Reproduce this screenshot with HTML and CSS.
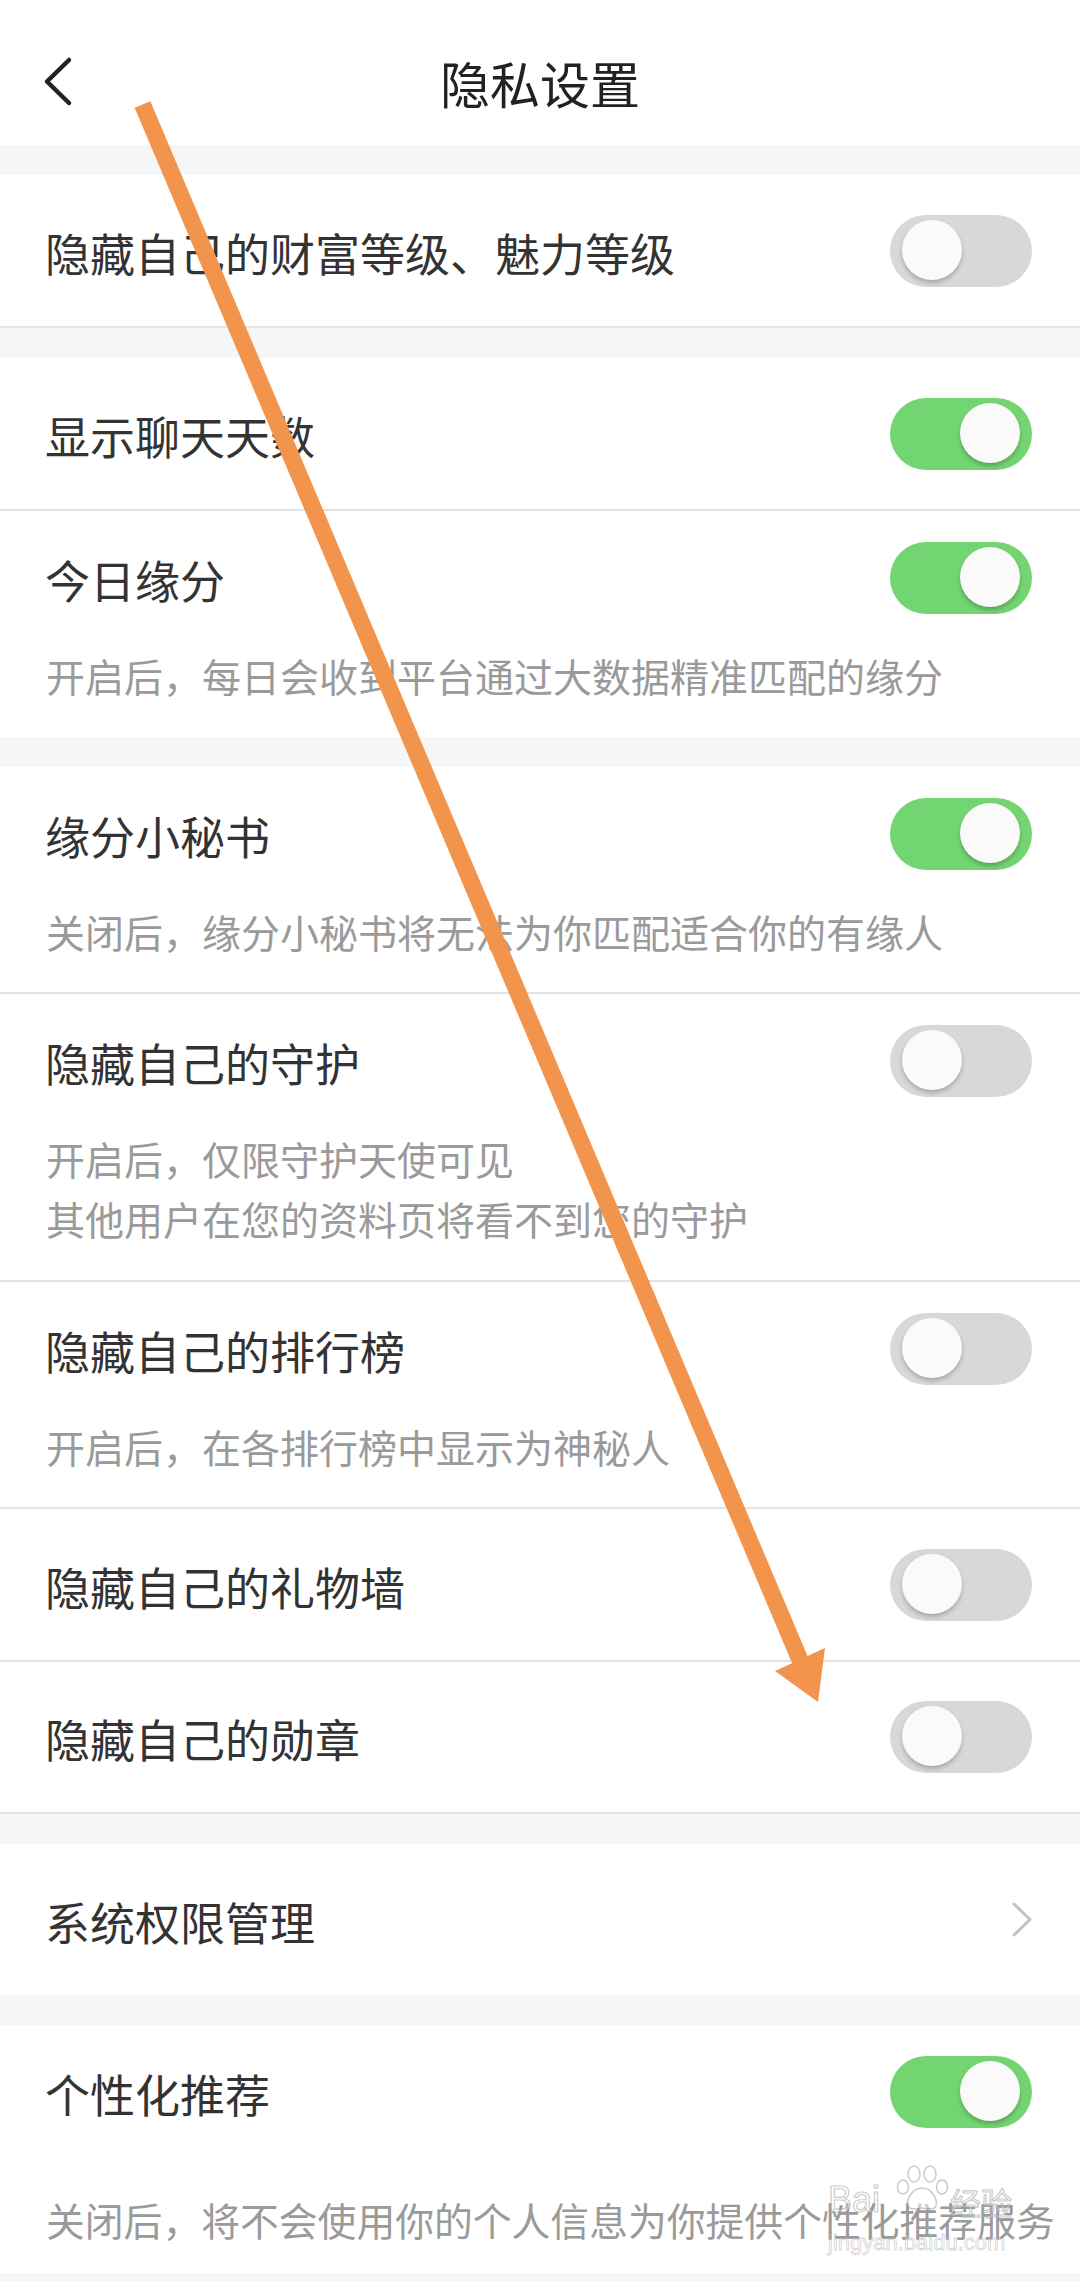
FILE: index.html
```html
<!DOCTYPE html>
<html lang="zh-CN">
<head>
<meta charset="utf-8">
<title>隐私设置</title>
<link rel="stylesheet" href="styles.css">
</head>
<body>
<div class="page">
  <header class="topbar">
    <div class="back">
      <svg class="back-icon" width="40" height="60" viewBox="0 0 40 60"><polyline points="31,8 9,29.5 31,51" fill="none" stroke="#222" stroke-width="4.5" stroke-linecap="round" stroke-linejoin="round"/></svg>
    </div>
    <h1 class="title">隐私设置</h1>
    <div></div>
  </header>

  <section class="group group-bordered">
    <div class="item">
      <div class="item-main"><span class="label">隐藏自己的财富等级、魅力等级</span><span class="switch"><span class="knob"></span></span></div>
    </div>
  </section>

  <section class="group">
    <div class="item divided">
      <div class="item-main"><span class="label">显示聊天天数</span><span class="switch on"><span class="knob"></span></span></div>
    </div>
    <div class="item has-desc">
      <div class="item-main"><span class="label">今日缘分</span><span class="switch on"><span class="knob"></span></span></div>
      <p class="desc">开启后，每日会收到平台通过大数据精准匹配的缘分</p>
    </div>
  </section>

  <section class="group group-bordered">
    <div class="item has-desc divided">
      <div class="item-main"><span class="label">缘分小秘书</span><span class="switch on"><span class="knob"></span></span></div>
      <p class="desc">关闭后，缘分小秘书将无法为你匹配适合你的有缘人</p>
    </div>
    <div class="item has-desc divided">
      <div class="item-main"><span class="label">隐藏自己的守护</span><span class="switch"><span class="knob"></span></span></div>
      <p class="desc">开启后，仅限守护天使可见<br>其他用户在您的资料页将看不到您的守护</p>
    </div>
    <div class="item has-desc divided">
      <div class="item-main"><span class="label">隐藏自己的排行榜</span><span class="switch"><span class="knob"></span></span></div>
      <p class="desc">开启后，在各排行榜中显示为神秘人</p>
    </div>
    <div class="item divided">
      <div class="item-main"><span class="label">隐藏自己的礼物墙</span><span class="switch"><span class="knob"></span></span></div>
    </div>
    <div class="item">
      <div class="item-main short"><span class="label">隐藏自己的勋章</span><span class="switch"><span class="knob"></span></span></div>
    </div>
  </section>

  <section class="group">
    <div class="item">
      <div class="item-main"><span class="label">系统权限管理</span>
        <svg class="chevron" width="24" height="40" viewBox="0 0 24 40"><polyline points="4,4 20,19.5 4,35" fill="none" stroke="#c2c2c2" stroke-width="3" stroke-linecap="round" stroke-linejoin="round"/></svg>
      </div>
    </div>
  </section>

  <section class="group">
    <div class="item has-desc">
      <div class="item-main"><span class="label">个性化推荐</span><span class="switch on"><span class="knob"></span></span></div>
      <p class="desc desc-last">关闭后，将不会使用你的个人信息为你提供个性化推荐服务</p>
    </div>
  </section>

  <div class="watermark">
    <svg class="paw" width="62" height="48" viewBox="0 0 62 48">
      <g fill="rgba(255,255,255,0.5)" stroke="rgba(150,150,150,0.5)" stroke-width="1.5">
        <ellipse cx="22" cy="10" rx="6" ry="8"/>
        <ellipse cx="38" cy="10" rx="6" ry="8"/>
        <ellipse cx="11" cy="23" rx="5.5" ry="7"/>
        <ellipse cx="50" cy="23" rx="5.5" ry="7"/>
        <path d="M30 24 C20 24 14 36 16 42 C18 47 26 44 30 44 C34 44 42 47 44 42 C46 36 40 24 30 24 Z"/>
      </g>
    </svg>
    <span class="wm-bai">Bai</span><span class="wm-jy">经验</span>
    <span class="wm-url">jingyan.baidu.com</span>
  </div>

  <svg class="annotation" width="1080" height="2281" viewBox="0 0 1080 2281">
    <line x1="142.5" y1="104.5" x2="800" y2="1660" stroke="#f2944b" stroke-width="17"/>
    <polygon points="775,1671 825,1648 818,1702" fill="#f2944b"/>
  </svg>
</div>
</body>
</html>
```

FILE: styles.css
```css
html, body {
  margin: 0;
  padding: 0;
  background: #f5f6f8;
}

body {
  font-family: "Noto Sans CJK SC", "Noto Sans", sans-serif;
  color: #333;
}

.page {
  position: relative;
  width: 1080px;
  min-height: 2281px;
  overflow: hidden;
}

.topbar {
  height: 145px;
  box-sizing: border-box;
  padding-top: 18px;
  background: #fff;
  display: grid;
  grid-template-columns: 1fr auto 1fr;
  align-items: center;
}

.back {
  padding-left: 38px;
  display: flex;
  align-items: center;
}

.back-icon {
  display: block;
}

.title {
  margin: 0;
  font-size: 50px;
  font-weight: 400;
  color: #222;
  line-height: 60px;
  letter-spacing: 0;
}

.group {
  background: #fff;
  margin-top: 30px;
}

.group-bordered {
  border-bottom: 2px solid #e4e5ea;
}

.item.divided {
  border-bottom: 2px solid #e3e3e3;
}

.item-main {
  height: 151px;
  box-sizing: border-box;
  padding: 0 48px 0 45px;
  display: flex;
  align-items: center;
  justify-content: space-between;
}

.item-main.short {
  height: 150px;
}

.has-desc .item-main {
  height: 134px;
}

.label {
  font-size: 45px;
  line-height: 60px;
  color: #333;
  padding-top: 4px;
}

.desc {
  margin: 0;
  padding: 0 0 31.5px 46px;
  font-size: 39px;
  line-height: 60px;
  color: #9a9a9a;
  white-space: nowrap;
}

.desc-last {
  padding-top: 30px;
  padding-bottom: 24px;
  font-size: 38.8px;
}

.switch {
  width: 142px;
  height: 72px;
  box-sizing: border-box;
  border-radius: 36px;
  background: #d8d8d8;
  padding: 5px 12px;
  display: flex;
  justify-content: flex-start;
  align-items: flex-start;
  flex-shrink: 0;
}

.switch.on {
  background: #73d571;
  justify-content: flex-end;
}

.knob {
  width: 60px;
  height: 60px;
  border-radius: 50%;
  background: #fafafa;
  box-shadow: 0 3px 4px rgba(0, 0, 0, 0.22);
}

.chevron {
  display: block;
  margin-right: -2px;
}

.watermark {
  position: absolute;
  left: 826px;
  top: 2162px;
  width: 200px;
  height: 100px;
  pointer-events: none;
}

.paw {
  position: absolute;
  left: 66px;
  top: 2px;
}

.wm-bai,
.wm-jy,
.wm-url {
  position: absolute;
  color: rgba(255, 255, 255, 0.4);
  -webkit-text-stroke: 1.2px rgba(150, 150, 150, 0.5);
}

.wm-bai {
  left: 2px;
  top: 18px;
  font-family: "Liberation Sans", sans-serif;
  font-size: 36px;
  line-height: 40px;
}

.wm-jy {
  left: 124px;
  top: 20px;
  font-family: "Noto Sans CJK SC", sans-serif;
  font-size: 31px;
  line-height: 40px;
}

.wm-url {
  left: 2px;
  top: 68px;
  font-family: "Liberation Sans", sans-serif;
  font-size: 22px;
  line-height: 26px;
  -webkit-text-stroke: 0.8px rgba(150, 150, 150, 0.45);
}

.annotation {
  position: absolute;
  left: 0;
  top: 0;
  pointer-events: none;
}
```
